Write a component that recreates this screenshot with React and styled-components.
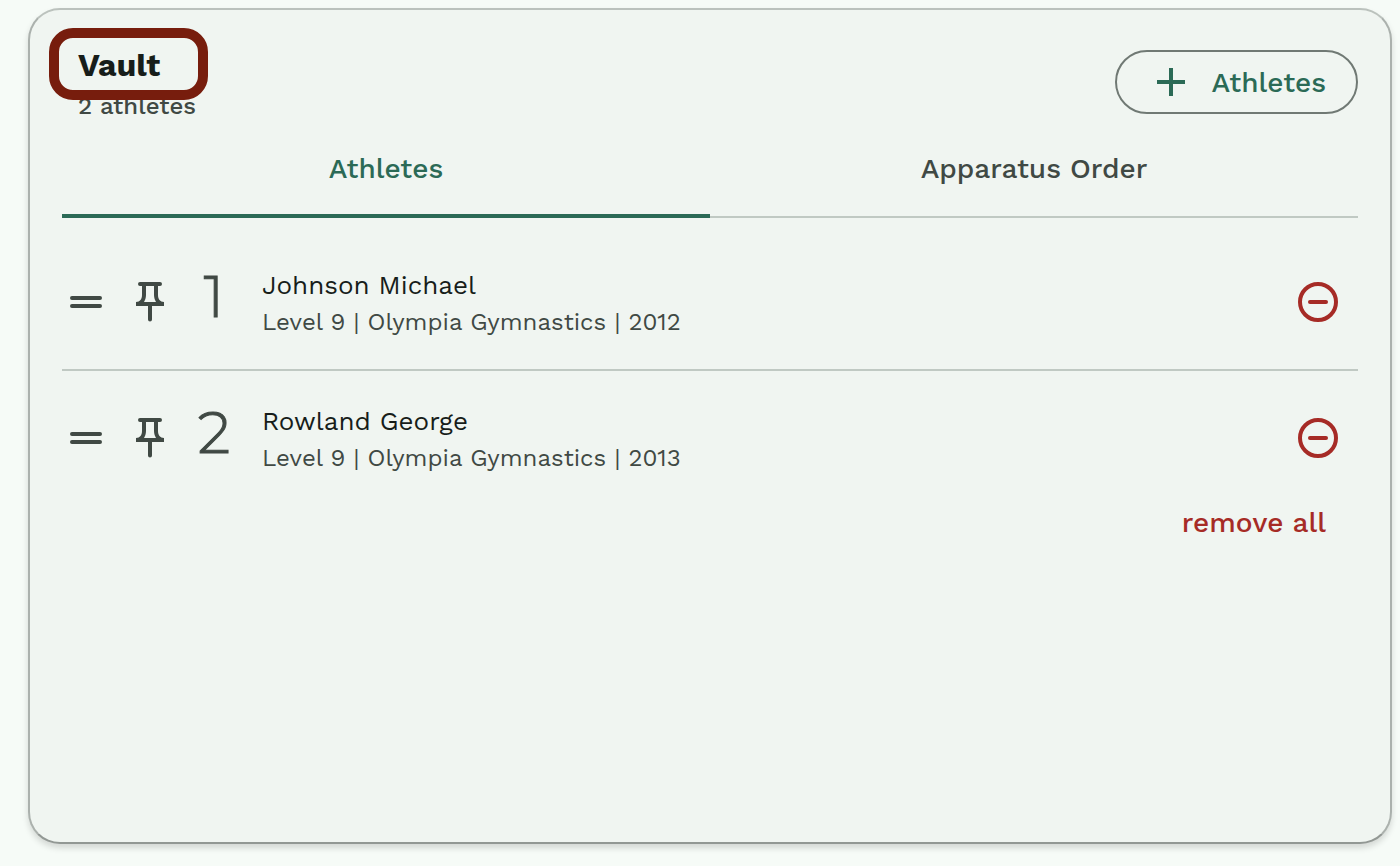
import { useState } from "react";
import styled, { createGlobalStyle } from "styled-components";

const athletes = [
  { id: 1, name: "Johnson Michael", level: "Level 9", club: "Olympia Gymnastics", year: 2012 },
  { id: 2, name: "Rowland George", level: "Level 9", club: "Olympia Gymnastics", year: 2013 },
];

export default function App() {
  const [tab, setTab] = useState("athletes");

  return (
    <Page>
      <GlobalStyle />
      <Card>
        <CardHeader>
          <div>
            <CardTitle>Vault</CardTitle>
            <CardSubtitle>2 athletes</CardSubtitle>
          </div>
          <AddButton type="button">
            <PlusIcon />
            Athletes
          </AddButton>
          <Highlight />
        </CardHeader>
        <TabList role="tablist">
          <Tab
            type="button"
            role="tab"
            aria-selected={tab === "athletes"}
            $active={tab === "athletes"}
            onClick={() => setTab("athletes")}
          >
            Athletes
          </Tab>
          <Tab
            type="button"
            role="tab"
            aria-selected={tab === "order"}
            $active={tab === "order"}
            onClick={() => setTab("order")}
          >
            Apparatus Order
          </Tab>
        </TabList>
        <AthleteList>
          {athletes.map((athlete, index) => (
            <AthleteItem key={athlete.id}>
              <IconButton type="button" aria-label="Reorder">
                <DragIcon />
              </IconButton>
              <IconButton type="button" aria-label="Pin">
                <PinIcon />
              </IconButton>
              <Position>{index + 1}</Position>
              <AthleteInfo>
                <AthleteName>{athlete.name}</AthleteName>
                <AthleteDetail>
                  {`${athlete.level} | ${athlete.club} | ${athlete.year}`}
                </AthleteDetail>
              </AthleteInfo>
              <RemoveButton type="button" aria-label="Remove">
                <MinusIcon />
              </RemoveButton>
            </AthleteItem>
          ))}
        </AthleteList>
        <CardFooter>
          <RemoveAll type="button">remove all</RemoveAll>
        </CardFooter>
      </Card>
    </Page>
  );
}

function PlusIcon() {
  return (
    <svg width="28" height="28" viewBox="0 0 28 28" fill="currentColor" aria-hidden="true">
      <path d="M12 0h4v12h12v4H16v12h-4V16H0v-4h12z" />
    </svg>
  );
}

function DragIcon() {
  return (
    <svg width="32" height="12" viewBox="0 0 32 12" fill="none" stroke="currentColor" aria-hidden="true">
      <path d="M2 2h28M2 10h28" strokeWidth="4" strokeLinecap="round" />
    </svg>
  );
}

function PinIcon() {
  return (
    <svg width="28" height="40" viewBox="0 0 28 40" fill="currentColor" aria-hidden="true">
      <path
        fillRule="evenodd"
        d="M4 0h20a2 2 0 0 1 0 4h-2v9c0 4 2 7 6 7v4H16v13.500a2 2 0 0 1-4 0V24H0v-4c4 0 6-3 6-7V4H4a2 2 0 0 1 0-4zM10 4v9c0 3-1 5-2 7h12c-1-2-2-4-2-7V4z"
      />
    </svg>
  );
}

function MinusIcon() {
  return (
    <svg width="40" height="40" viewBox="0 0 40 40" fill="none" stroke="currentColor" strokeWidth="4" aria-hidden="true">
      <circle cx="20" cy="20" r="18" />
      <path d="M12 20h16" strokeLinecap="round" />
    </svg>
  );
}

const GlobalStyle = createGlobalStyle`
  * {
    box-sizing: border-box;
  }

  body {
    margin: 0;
    background-color: #f6fbf7;
    color: #171d1a;
    font-family: "Work Sans", Inter, sans-serif;
  }

  h2, p, ul {
    margin: 0;
    padding: 0;
  }

  button {
    padding: 0;
    border: none;
    background: none;
    font-family: inherit;
    cursor: pointer;
  }

  svg {
    display: block;
    flex-shrink: 0;
  }
`;

const Page = styled.main`
  display: flex;
  min-height: 100vh;
  padding: 8px 8px 22px 28px;
`;

const Card = styled.section`
  flex: 1;
  padding: 40px 32px;
  border: 2px solid;
  border-color: #bbc2bd #abb1ad #929894;
  border-radius: 32px;
  background-color: #f0f5f1;
  box-shadow: 0 4px 6px rgba(0, 0, 0, 0.14);
`;

const CardHeader = styled.header`
  position: relative;
  display: flex;
  justify-content: space-between;
  align-items: flex-start;
  height: 72px;
  padding-left: 16px;
`;

const CardTitle = styled.h2`
  font-size: 32px;
  font-weight: 700;
  line-height: 30px;
`;

const CardSubtitle = styled.p`
  margin-top: 10px;
  color: #404944;
  font-size: 24px;
  font-weight: 500;
  line-height: 32px;
`;

const Highlight = styled.div`
  position: absolute;
  top: -22px;
  left: -13px;
  width: 159px;
  height: 72px;
  border: 10px solid #771d0d;
  border-radius: 24px;
  pointer-events: none;
`;

const AddButton = styled.button`
  display: flex;
  align-items: center;
  gap: 27px;
  height: 64px;
  padding: 0 30px 0 40px;
  border: 2px solid #707974;
  border-radius: 32px;
  color: #2b6a56;
  font-size: 28px;
  font-weight: 500;
`;

const TabList = styled.div`
  display: flex;
`;

const Tab = styled.button`
  flex: 1;
  height: 96px;
  padding-bottom: 4px;
  box-shadow: inset 0 ${({ $active }) => ($active ? "-4px #2b6a56" : "-2px #c0c9c3")};
  color: ${({ $active }) => ($active ? "#2b6a56" : "#404944")};
  font-size: 28px;
  font-weight: 500;
`;

const AthleteList = styled.ul`
  padding-top: 16px;
  list-style: none;
`;

const AthleteItem = styled.li`
  display: flex;
  align-items: center;
  height: 136px;
  padding-right: 20px;

  & + & {
    box-shadow: 0 -1px #c0c9c3, inset 0 1px #c0c9c3;
  }
`;

const IconButton = styled.button`
  display: grid;
  place-items: center;
  width: 48px;
  height: 48px;
  margin-right: 16px;
  color: #404944;
`;

const Position = styled.span`
  width: 48px;
  margin-right: 24px;
  padding-bottom: 10px;
  color: #404944;
  font-family: Montserrat, Quicksand, "Work Sans", sans-serif;
  font-size: 58px;
  font-weight: 300;
  line-height: 60px;
  text-align: center;
  -webkit-text-stroke: 1px #404944;
`;

const AthleteInfo = styled.div`
  flex: 1;
  padding-top: 4px;
`;

const AthleteName = styled.p`
  font-size: 26px;
  line-height: 36px;
`;

const AthleteDetail = styled.p`
  color: #404944;
  font-size: 24px;
  line-height: 38px;
`;

const RemoveButton = styled.button`
  color: #a62b26;
`;

const CardFooter = styled.footer`
  display: flex;
  justify-content: flex-end;
  padding-right: 32px;
`;

const RemoveAll = styled.button`
  color: #a62b26;
  font-size: 28px;
  font-weight: 500;
  line-height: 34px;
`;
